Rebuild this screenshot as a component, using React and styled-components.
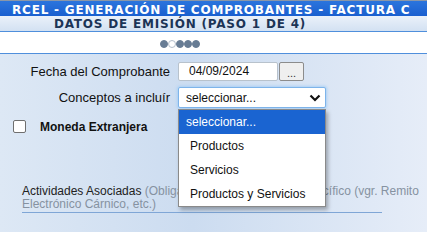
import React from 'react';
import styled, { createGlobalStyle } from 'styled-components';

const GlobalStyle = createGlobalStyle`
    html, body {
        margin: 0;
        padding: 0;
    }
    body {
        width: 427px;
        height: 232px;
        overflow: hidden;
        font-family: "Liberation Sans", Arial, sans-serif;
        background: linear-gradient(90deg, #dde8f5 0%, #ccdcf0 45%, #e6edf8 100%);
    }
`

const Page = styled.div`
    width: 427px;
    height: 232px;
    display: flex;
    flex-direction: column;
`
const TitleBar = styled.div`
    height: 16px;
    box-sizing: border-box;
    border-top: 1px solid #8a97a8;
    background: linear-gradient(180deg, #2b75dd 0%, #1a5fcf 100%);
    color: white;
    font-family: "DejaVu Sans", Verdana, sans-serif;
    font-weight: bold;
    font-size: 12px;
    letter-spacing: 0.8px;
    line-height: 12px;
    padding: 3px 0 0 12px;
    white-space: nowrap;
    overflow: visible;
`
const StepBar = styled.div`
    height: 16px;
    box-sizing: border-box;
    background: linear-gradient(180deg, #eaf1fa 0%, #d3e1f2 100%);
    border-bottom: 1px solid #4f8fdc;
    color: #1c3456;
    font-family: "DejaVu Sans", Verdana, sans-serif;
    font-weight: bold;
    font-size: 12px;
    letter-spacing: 0.8px;
    line-height: 12px;
    padding: 2px 67px 0 0;
    text-align: center;
    white-space: nowrap;
`
const DotsBand = styled.div`
    height: 22px;
    box-sizing: border-box;
    background: white;
    border-bottom: 1px solid #4f8fdc;
    display: flex;
    align-items: center;
    justify-content: center;
    padding: 3px 67px 0 0;
`
const Dot = styled.span`
    width: 8px;
    height: 8px;
    border-radius: 50%;
    box-sizing: border-box;
    background: ${p => (p.$empty ? 'white' : '#677c94')};
    border: 1px solid ${p => (p.$empty ? '#b4bfcc' : '#677c94')};
`
const Body = styled.div`
    position: relative;
    flex: 1;
    padding-top: 8px;
`
const FieldRow = styled.div`
    display: flex;
    align-items: center;
    height: ${p => p.$h}px;
    margin-bottom: ${p => p.$mb || 0}px;
`
const Label = styled.label`
    width: 170px;
    text-align: right;
    font-size: 13px;
    color: #111;
    margin-right: 8px;
`
const DateInput = styled.div`
    width: 100px;
    height: 19px;
    box-sizing: border-box;
    background: white;
    border: 1px solid #b8c2cc;
    border-radius: 2px;
    font-size: 12px;
    line-height: 17px;
    padding-left: 10px;
    color: #111;
`
const DotsButton = styled.button`
    margin-left: 1px;
    width: 25px;
    height: 19px;
    box-sizing: border-box;
    border: 1px solid #8c8c8c;
    border-radius: 2px;
    background: #efefef;
    font-family: "Liberation Sans", Arial, sans-serif;
    font-size: 11px;
    line-height: 10px;
    padding: 3px 0 0;
    color: #333;
`
const Select = styled.div`
    width: 148px;
    height: 21px;
    box-sizing: border-box;
    background: white;
    border: 1px solid #7eb4ea;
    border-radius: 2px;
    box-shadow: 0 0 3px 1px #a9d0f5;
    display: flex;
    align-items: center;
    justify-content: space-between;
    padding: 0 4px 0 7px;
    font-size: 12px;
    color: #111;
`
const CheckRow = styled.div`
    display: flex;
    align-items: center;
    height: 13px;
    padding-left: 13px;
    margin-top: 12px;
`
const Check = styled.span`
    width: 13px;
    height: 13px;
    box-sizing: border-box;
    border: 1px solid #6f6f6f;
    border-radius: 2px;
    background: white;
    margin-right: 14px;
`
const CheckLabel = styled.span`
    font-size: 12px;
    font-weight: bold;
    color: #111;
`
const Activities = styled.div`
    margin: 52px 0 0 22px;
    font-size: 12px;
    line-height: 13px;
    color: #222;
    white-space: nowrap;
`
const Hint = styled.span`
    color: #8692a1;
`
const Underline = styled.div`
    margin: 1px 0 0 22px;
    width: 360px;
    height: 1px;
    background: #7fa6d6;
`
const Dropdown = styled.ul`
    position: absolute;
    left: 178px;
    top: 55px;
    width: 148px;
    margin: 0;
    padding: 0;
    list-style: none;
    background: white;
    border: 1px solid #8a8a8a;
    box-sizing: border-box;
    box-shadow: 2px 3px 4px rgba(0, 0, 0, 0.3);
`
const Option = styled.li`
    height: 24px;
    line-height: 24px;
    padding-left: ${p => (p.$active ? 7 : 11)}px;
    font-size: 12px;
    color: ${p => (p.$active ? 'white' : '#111')};
    background: ${p => (p.$active ? '#1a64d1' : 'white')};
`

const options = ['seleccionar...', 'Productos', 'Servicios', 'Productos y Servicios'];

function Chevron() {
    return (
        <svg width="12" height="8" viewBox="0 0 12 8">
            <path d="M1.5 1.5 L6 6 L10.5 1.5" fill="none" stroke="#111" strokeWidth="2.2" />
        </svg>
    )
}

export default function App() {
    return (
        <>
            <GlobalStyle />
            <Page>
                <TitleBar>RCEL - GENERACIÓN DE COMPROBANTES - FACTURA C</TitleBar>
                <StepBar>DATOS DE EMISIÓN (PASO 1 DE 4)</StepBar>
                <DotsBand>
                    <Dot />
                    <Dot $empty />
                    <Dot />
                    <Dot />
                    <Dot />
                </DotsBand>
                <Body>
                    <FieldRow $h={19} $mb={6}>
                        <Label>Fecha del Comprobante</Label>
                        <DateInput>04/09/2024</DateInput>
                        <DotsButton>...</DotsButton>
                    </FieldRow>
                    <FieldRow $h={21}>
                        <Label>Conceptos a incluír</Label>
                        <Select>
                            <span>seleccionar...</span>
                            <Chevron />
                        </Select>
                    </FieldRow>
                    <CheckRow>
                        <Check />
                        <CheckLabel>Moneda Extranjera</CheckLabel>
                    </CheckRow>
                    <Activities>
                        Actividades Asociadas <Hint>(Obligatorio para el régimen específico (vgr. Remito</Hint>
                        <br />
                        <Hint>Electrónico Cárnico, etc.)</Hint>
                    </Activities>
                    <Underline />
                    <Dropdown>
                        {options.map((o, i) => (
                            <Option key={o} $active={i === 0}>{o}</Option>
                        ))}
                    </Dropdown>
                </Body>
            </Page>
        </>
    )
}
